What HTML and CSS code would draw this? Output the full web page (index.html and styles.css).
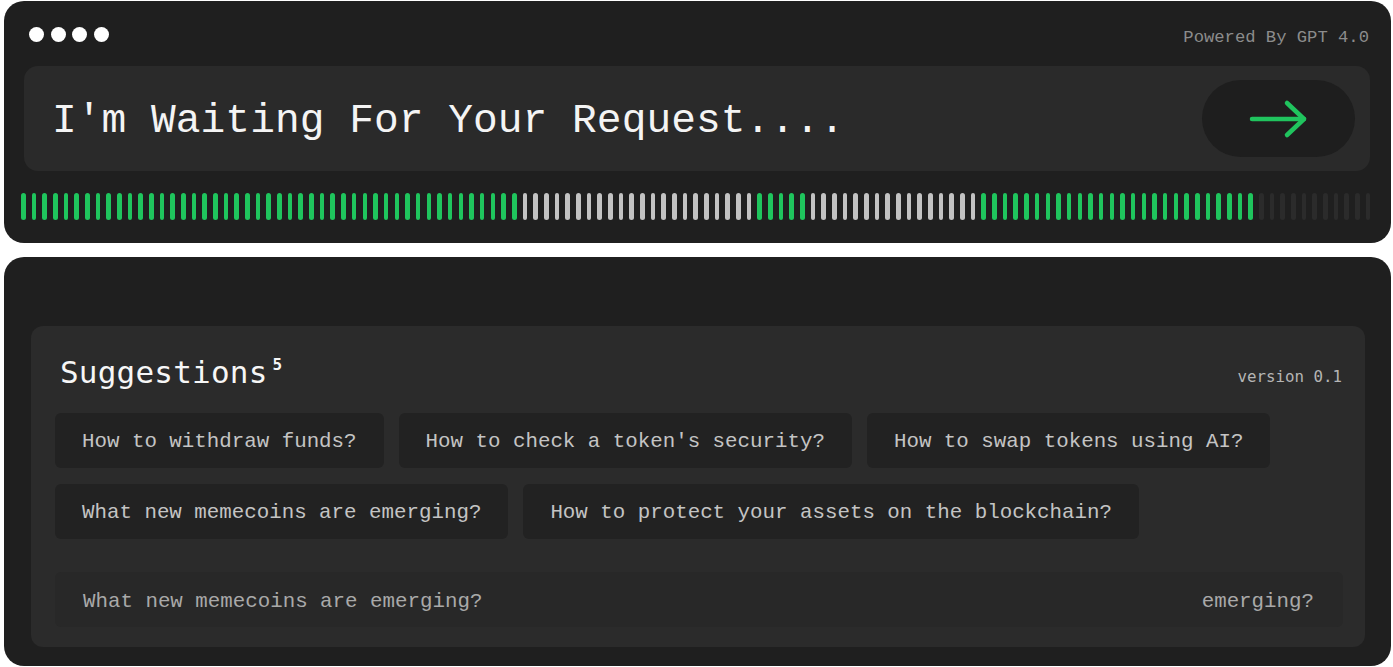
FILE: index.html
```html
<!DOCTYPE html>
<html lang="en">
<head>
<meta charset="utf-8">
<title>AI Request</title>
<link rel="stylesheet" href="styles.css">
</head>
<body>
<div class="page">
  <section class="panel top-panel">
    <header class="top-head">
      <div class="dots"><span></span><span></span><span></span><span></span></div>
      <div class="powered">Powered By GPT 4.0</div>
    </header>
    <div class="input">
      <div class="prompt">I'm Waiting For Your Request....</div>
      <button class="send" aria-label="Send">
        <svg width="60" height="40" viewBox="0 0 60 40" fill="none" stroke="#20c45e" stroke-width="4.5" stroke-linecap="round" stroke-linejoin="round">
          <path d="M3 20 H55"/>
          <path d="M38 4 L55 20 L38 36"/>
        </svg>
      </button>
    </div>
    <div class="bars" id="bars"></div>
  </section>

  <section class="panel bottom-panel">
    <div class="card">
      <div class="card-head">
        <h2 class="title">Suggestions<sup>5</sup></h2>
        <span class="version">version 0.1</span>
      </div>
      <div class="chips">
        <div class="chip-row">
          <span class="chip">How to withdraw funds?</span>
          <span class="chip">How to check a token's security?</span>
          <span class="chip">How to swap tokens using AI?</span>
        </div>
        <div class="chip-row">
          <span class="chip">What new memecoins are emerging?</span>
          <span class="chip">How to protect your assets on the blockchain?</span>
        </div>
        <div class="ticker">
          <span>What new memecoins are emerging?</span>
          <span>emerging?</span>
        </div>
      </div>
    </div>
  </section>
</div>
<script src="script.js"></script>
</body>
</html>
```

FILE: script.js
```js
(function () {
  var segs = [["g", 47], ["w", 22], ["g", 5], ["w", 16], ["g", 26], ["d", 11]];
  var host = document.getElementById("bars");
  segs.forEach(function (s) {
    for (var i = 0; i < s[1]; i++) {
      var b = document.createElement("span");
      b.className = "bar " + s[0];
      host.appendChild(b);
    }
  });
})();
```

FILE: styles.css
```css
* { box-sizing: border-box; }
html, body { margin: 0; padding: 0; background: #ffffff; }
body {
  font-family: "Liberation Mono", "DejaVu Sans Mono", monospace;
  color: #f2f2f2;
}
.page {
  width: 1393px;
  padding: 1px 2px 0 4px;
  display: flex;
  flex-direction: column;
  gap: 14px;
}
.panel {
  background: #1f1f1f;
  border-radius: 20px;
}
.top-panel {
  height: 242px;
  padding: 0 21px 0 20px;
  display: flex;
  flex-direction: column;
}
.top-head {
  height: 65px;
  display: flex;
  align-items: center;
  justify-content: space-between;
  padding: 0 1px 0 5px;
}
.dots { display: flex; gap: 6.5px; margin-top: 1px; }
.dots span {
  width: 15px; height: 15px; border-radius: 50%;
  background: #ffffff;
}
.powered {
  font-size: 17.2px;
  color: #8c8c8c;
  margin-top: 7px;
}
.input {
  height: 105px;
  background: #2a2a2a;
  border-radius: 14px;
  display: flex;
  align-items: center;
  justify-content: space-between;
  padding: 0 15px 0 28px;
}
.prompt {
  font-size: 41.2px;
  color: #f4f4f4;
  letter-spacing: 0.05px;
  margin-top: 4px;
}
.send {
  width: 153px; height: 77px;
  border: 0;
  border-radius: 39px;
  background: #1e1e1e;
  display: flex; align-items: center; justify-content: center;
  padding: 0;
}
.bars {
  margin: 22px 0 0 -3px;
  width: 1351px;
  height: 27px;
  display: flex;
  justify-content: space-between;
}
.bar {
  width: 4.6px;
  height: 27px;
  border-radius: 3px;
}
.bar.g { background: #1fc55d; }
.bar.w { background: #c2c2c2; }
.bar.d { background: #2b2b2b; }

.bottom-panel {
  height: 409px;
  padding: 69px 26px 19px 27px;
}
.card {
  height: 321px;
  background: #2b2b2b;
  border-radius: 12px;
  padding: 28px 22px 0 24px;
}
.card-head {
  height: 36px;
  display: flex;
  align-items: center;
  justify-content: space-between;
}
.title {
  margin: 0 0 0 5px;
  font-family: "DejaVu Sans Mono", "Liberation Mono", monospace;
  font-weight: normal;
  font-size: 31px;
  letter-spacing: 0.2px;
  color: #f6f6f6;
  line-height: 36px;
}
.title sup {
  font-size: 16px;
  font-weight: bold;
  vertical-align: top;
  line-height: 16px;
  position: relative;
  top: 3px;
  margin-left: 5px;
}
.version {
  font-family: "DejaVu Sans Mono", monospace;
  font-size: 15.8px;
  color: #b5b5b5;
  margin-top: 8px;
  margin-right: 1px;
}
.chips {
  margin-top: 23px;
  display: flex;
  flex-direction: column;
  gap: 16px;
}
.chip-row { display: flex; gap: 15px; }
.chip {
  height: 55px;
  display: inline-flex;
  align-items: center;
  padding: 2px 27px 0;
  background: #222222;
  border-radius: 6px;
  font-size: 20.8px;
  color: #c4c4c4;
  white-space: nowrap;
}
.ticker {
  margin-top: 17px;
  height: 55px;
  background: #282828;
  border-radius: 6px;
  display: flex;
  align-items: center;
  justify-content: space-between;
  padding: 4px 29px 0 28px;
  font-size: 20.8px;
  color: #a9a9a9;
  white-space: nowrap;
}
```
